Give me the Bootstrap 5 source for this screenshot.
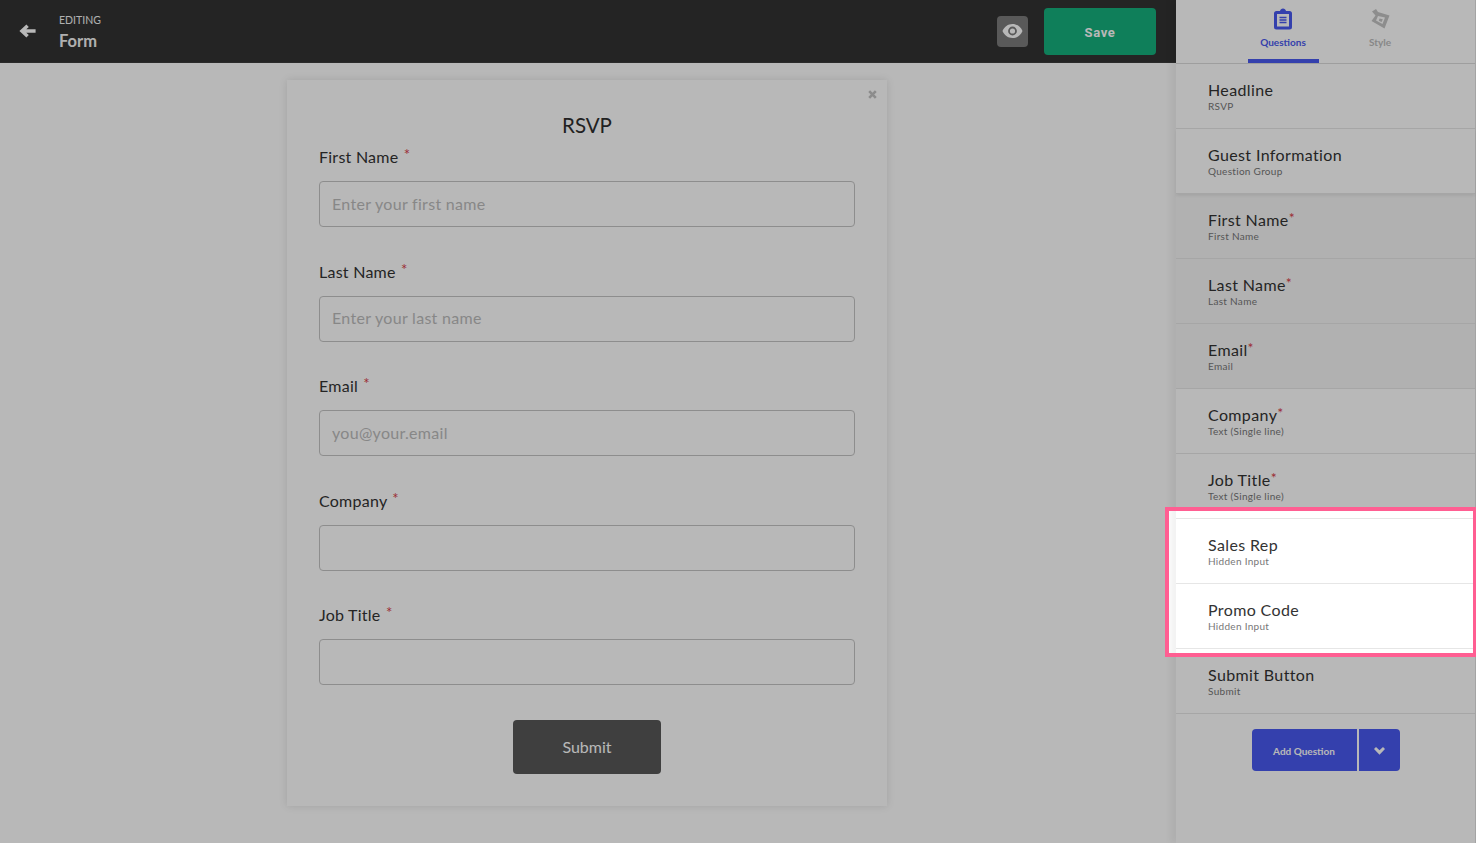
<!DOCTYPE html>
<html lang="en">
<head>
<meta charset="utf-8">
<title>Form editor</title>
<link href="https://cdn.jsdelivr.net/npm/bootstrap@5.3.0/dist/css/bootstrap.min.css" rel="stylesheet">
<style>
html,body{height:100%}
body{font-family:Lato,"Liberation Sans",sans-serif;color:#333;background:#fff;overflow:hidden;position:relative}
.app-shell{height:843px}
.main-pane{width:1176px}
.top-strip{height:63px;background:#323232;border-bottom:1px solid #3c3c3c;padding-left:19px;padding-right:20px}
.back-ico{width:17px;height:14px;margin-right:23px}
.edit-kicker{font-size:10.500px;line-height:13px;color:#fff;opacity:.95;margin-top:3px}
.edit-name{font-size:16.500px;line-height:22px;font-weight:700;color:#fff;margin-top:3px;opacity:.95}
.eye-box{width:31px;height:31px;background:#7c7c7c;border-radius:4px;margin-right:16px}
.save-btn{width:112px;height:47px;background:#16b07d;border-radius:4px;color:#fff;font:700 13px "Roboto",sans-serif;letter-spacing:.6px;border:0;padding:2px 0 0}
.canvas-area{height:780px;padding-top:17px;padding-right:2px}
.form-sheet{width:600px;height:726px;background:#fff;box-shadow:0 0 8px rgba(0,0,0,.12);padding:31.500px 32px 0;position:relative}
.close-x{position:absolute;top:10px;right:10px;width:9px;height:9px;display:block}
.sheet-title{font-size:20.500px;line-height:26px;font-weight:400;text-align:center;margin:0 0 7.500px;color:#2f2f2f}
.field-wrap{margin-bottom:32.500px}
.field-label{font-size:16px;line-height:24px;display:block;margin:0 0 12px;color:#333;letter-spacing:.25px}
.req-mark{color:#d8404a;font-size:15px;line-height:0;position:relative;top:-3px;margin-left:1px}
.field-input{height:46px;border:1px solid #c4c4c4;border-radius:4px;padding:0 12px 2px;font-size:16px;font-family:inherit;letter-spacing:.3px;color:#333;width:100%}
.field-input::placeholder{color:#bcbcbc;opacity:1}
.submit-btn{width:148px;height:54px;background:#585858;color:#fff;border:0;border-radius:4px;font-size:16px;font-family:inherit;display:block;margin:35px auto 0;opacity:1}
.field-wrap:last-of-type{margin-bottom:0}
.side-pane{width:300px;border-right:1px solid #e4e4e4;box-shadow:-6px 0 6px rgba(0,0,0,.05);height:843px;position:relative}
.tab-strip{height:64px;border-bottom:1px solid #dcdcdc;padding-left:12px}
.tab-item{height:64px;text-align:center;padding-top:8px;font-size:10px;line-height:14px;font-weight:700;color:#4a59ee;position:relative}
.tab-item svg{display:block;margin:0 auto 5px;height:22px}
.tab-on{border-bottom:4px solid #4859f0;height:63px;width:71px;margin-right:26px}
.tab-off{color:#bcbcbc;width:71px;font-weight:700}
.q-row{height:65px;padding:15px 0 0 32px;border-bottom:1px solid #e6e6e6;background:#fff}
.q-title{font-size:16px;line-height:22px;letter-spacing:.37px;color:#333}
.q-sub{font-size:10px;line-height:13px;letter-spacing:.3px;color:#777;margin-top:-1px}
.q-star{color:#d8404a;font-size:14px;line-height:0;position:relative;top:-3px}
.row-group-end{box-shadow:0 2px 3px rgba(0,0,0,.07);position:relative}
.row-nested{background:#f6f6f6}
.add-wrap{padding-top:15px}
.add-btn{height:42px;background:#4859f0;color:#fff;border:0;font-size:10px;font-weight:700;font-family:inherit;border-radius:4px 0 0 4px;width:105px;padding:2px 0 0}
.add-caret{height:42px;width:41px;background:#4859f0;border:0;border-radius:0 4px 4px 0;margin-left:2px;padding:2px 0 0}
.spot-frame{position:absolute;left:1165px;top:507px;width:312px;height:150px;border:4px solid #ff5e92;box-shadow:0 0 0 2000px rgba(0,0,0,.28);pointer-events:none}
</style>
</head>
<body>
<div class="app-shell d-flex">
  <div class="main-pane d-flex flex-column">
    <div class="top-strip d-flex align-items-center">
      <svg class="back-ico" viewBox="0 0 17 14"><path d="M7.400 0.500 9.800 2.900 7.300 5.200H16.600V8.800H7.300L9.800 11.100 7.400 13.500 0.400 7Z" fill="#fff"/></svg>
      <div>
        <div class="edit-kicker">EDITING</div>
        <div class="edit-name">Form</div>
      </div>
      <div class="ms-auto d-flex align-items-center">
        <div class="eye-box d-flex align-items-center justify-content-center">
          <svg width="21" height="14" viewBox="0 0 21 14"><path d="M10.500 0C6 0 2.200 2.800.5 7c1.700 4.200 5.500 7 10 7s8.300-2.800 10-7c-1.700-4.200-5.500-7-10-7Zm0 11.400a4.400 4.400 0 1 1 0-8.800 4.400 4.400 0 0 1 0 8.800Zm0-7a2.600 2.600 0 1 0 0 5.200 2.600 2.600 0 0 0 0-5.200Z" fill="#fff"/></svg>
        </div>
        <button class="btn save-btn" type="button">Save</button>
      </div>
    </div>
    <div class="canvas-area d-flex justify-content-center">
      <div class="form-sheet">
        <svg class="close-x" viewBox="0 0 9 9"><path d="M1.200 1.200 7.800 7.800M7.800 1.200 1.200 7.800" stroke="#c2c2c2" stroke-width="2.600"/></svg>
        <h1 class="sheet-title">RSVP</h1>
        <div class="field-wrap"><label class="field-label">First Name <span class="req-mark">*</span></label><input class="field-input form-control" placeholder="Enter your first name"></div>
        <div class="field-wrap"><label class="field-label">Last Name <span class="req-mark">*</span></label><input class="field-input form-control" placeholder="Enter your last name"></div>
        <div class="field-wrap"><label class="field-label">Email <span class="req-mark">*</span></label><input class="field-input form-control" placeholder="you@your.email"></div>
        <div class="field-wrap"><label class="field-label">Company <span class="req-mark">*</span></label><input class="field-input form-control"></div>
        <div class="field-wrap"><label class="field-label">Job Title <span class="req-mark">*</span></label><input class="field-input form-control"></div>
        <button class="btn submit-btn" type="button">Submit</button>
      </div>
    </div>
  </div>
  <div class="side-pane d-flex flex-column">
    <div class="tab-strip d-flex justify-content-center">
      <div class="tab-item tab-on">
        <svg width="18" height="22" viewBox="0 0 18 22"><path d="M2.500 3H6C6.300 1.500 7.500.5 9 .5s2.700 1 3 2.500h3.500A2.500 2.500 0 0 1 18 5.500V19a2.500 2.500 0 0 1-2.500 2.500h-13A2.500 2.500 0 0 1 0 19V5.500A2.500 2.500 0 0 1 2.500 3Z" fill="#4859f0"/><rect x="3" y="6" width="12" height="12.500" fill="#fff"/><path d="M5.500 9.500h7M5.500 12h7M5.500 14.500h7" stroke="#4859f0" stroke-width="1.300"/></svg>
        Questions
      </div>
      <div class="tab-item tab-off">
        <svg width="20" height="22" viewBox="0 0 20 22"><path d="M2 3.500 6 1 8 4 19.500 7.500 14.500 20.500 1.500 13 5.500 7.500Z" fill="#c4c4c4"/><path d="M8 8 15 9.500 12.500 16 6 12.500Z" fill="#fff"/><path d="M9.500 10.500 12.800 11.200 11.600 14 8.800 12.800Z" fill="#c4c4c4"/></svg>
        Style
      </div>
    </div>
    <div class="q-row"><div class="q-title">Headline</div><div class="q-sub">RSVP</div></div>
    <div class="q-row row-group-end"><div class="q-title">Guest Information</div><div class="q-sub">Question Group</div></div>
    <div class="q-row row-nested"><div class="q-title">First Name<span class="q-star">*</span></div><div class="q-sub">First Name</div></div>
    <div class="q-row row-nested"><div class="q-title">Last Name<span class="q-star">*</span></div><div class="q-sub">Last Name</div></div>
    <div class="q-row row-nested"><div class="q-title">Email<span class="q-star">*</span></div><div class="q-sub">Email</div></div>
    <div class="q-row"><div class="q-title">Company<span class="q-star">*</span></div><div class="q-sub">Text (Single line)</div></div>
    <div class="q-row"><div class="q-title">Job Title<span class="q-star">*</span></div><div class="q-sub">Text (Single line)</div></div>
    <div class="q-row"><div class="q-title">Sales Rep</div><div class="q-sub">Hidden Input</div></div>
    <div class="q-row"><div class="q-title">Promo Code</div><div class="q-sub">Hidden Input</div></div>
    <div class="q-row"><div class="q-title">Submit Button</div><div class="q-sub">Submit</div></div>
    <div class="add-wrap d-flex justify-content-center">
      <button class="btn add-btn" type="button">Add Question</button>
      <button class="btn add-caret d-flex align-items-center justify-content-center" type="button"><svg width="11" height="8" viewBox="0 0 11 8"><path d="M2 0 5.500 3.300 9 0 11 2.100 5.500 7.800 0 2.100Z" fill="#fff"/></svg></button>
    </div>
  </div>
</div>
<div class="spot-frame"></div>
</body>
</html>
